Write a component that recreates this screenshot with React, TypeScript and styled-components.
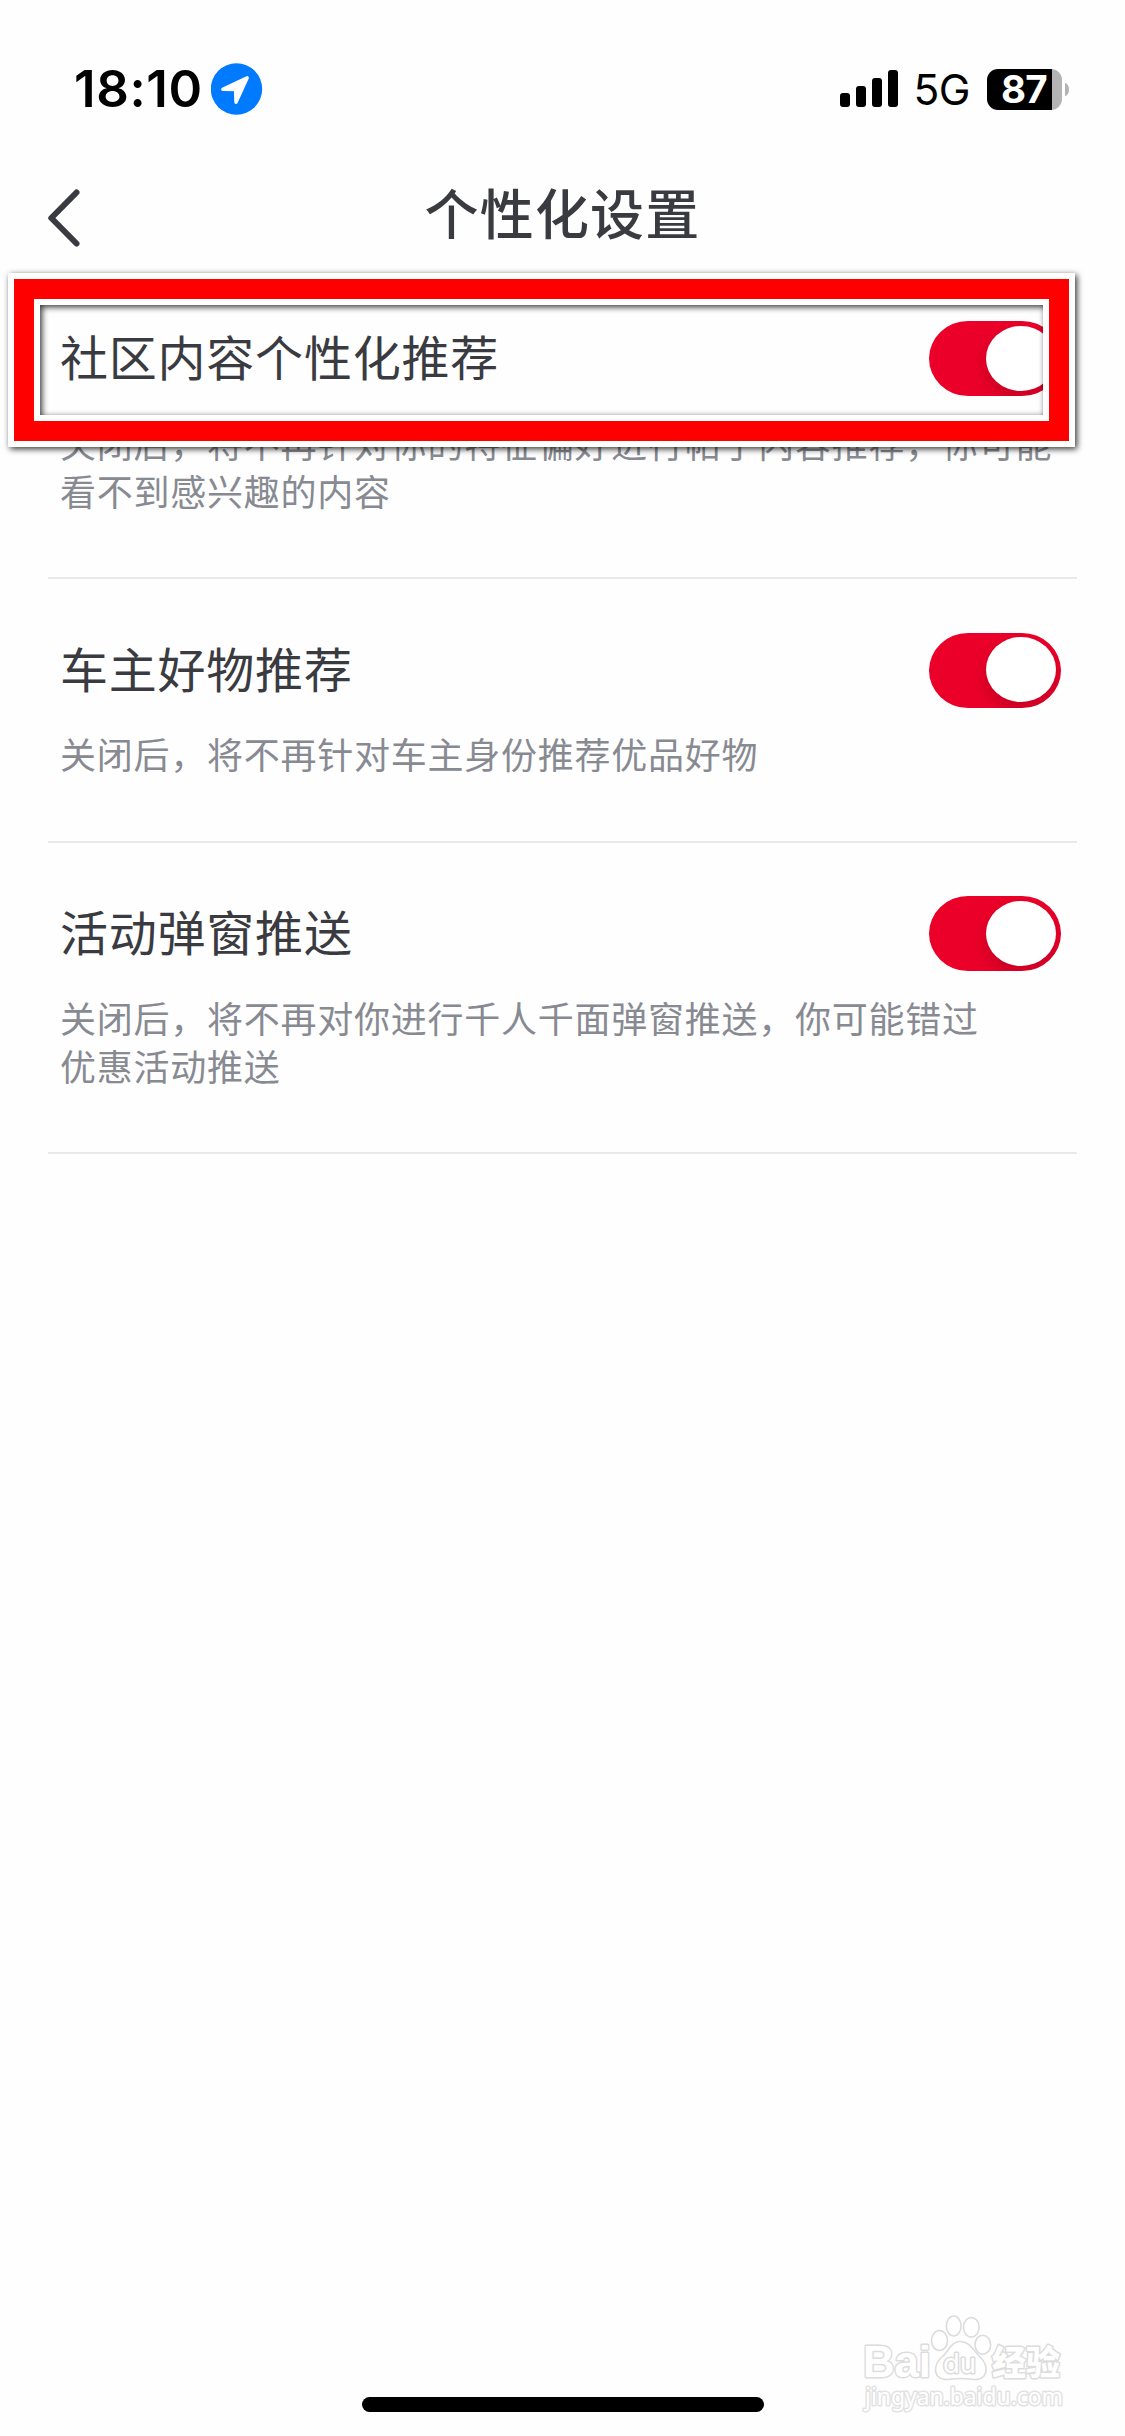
import React from "react";
import styled, { createGlobalStyle } from "styled-components";

const GlobalStyle = createGlobalStyle`
  * { box-sizing: border-box; }
  body {
    margin: 0;
    background: #fefefe;
    font-family: "Noto Sans CJK SC", "Liberation Sans", sans-serif;
    color: #3a3b41;
  }
`;

const Screen = styled.div`
  position: relative;
  width: 1125px;
  height: 2436px;
  overflow: hidden;
  display: flex;
  flex-direction: column;
  background: #fefefe;
`;

const StatusBar = styled.header`
  height: 132px;
  flex: none;
  display: flex;
  align-items: flex-start;
  justify-content: space-between;
  padding: 63px 56px 0 74px;
  font-family: Inter, "Liberation Sans", sans-serif;
  color: #000;
`;

const StatusSide = styled.div`
  display: flex;
  align-items: center;
  height: 52px;
`;

const Clock = styled.span`
  width: 137px;
  font-size: 51px;
  font-weight: 600;
  line-height: 52px;
  letter-spacing: 0.6px;
  white-space: nowrap;
`;

const Network = styled.span`
  width: 71px;
  padding-left: 14.5px;
  font-size: 42.5px;
  line-height: 52px;
  padding-top: 2px;
  letter-spacing: -0.7px;
`;

const Battery = styled.div`
  width: 75px;
  height: 41px;
  margin-left: 17px;
  border-radius: 11px;
  background: linear-gradient(to right, #000 65px, #b3b3b3 65px);
  color: #fff;
  font-size: 38.5px;
  font-weight: 700;
  line-height: 41px;
  padding-left: 14px;
  letter-spacing: -0.8px;
`;

const BatteryTip = styled.div`
  width: 4px;
  height: 13px;
  margin-left: 3px;
  border-radius: 0 4px 4px 0 / 0 6.5px 6.5px 0;
  background: #b3b3b3;
`;

const NavBar = styled.nav`
  height: 135.5px;
  flex: none;
  display: grid;
  grid-template-columns: 100px 1fr 100px;
`;

const BackButton = styled.button`
  border: 0;
  background: none;
  padding: 54px 0 0 44px;
  display: flex;
  align-items: flex-start;
`;

const PageTitle = styled.h1`
  margin: 0;
  padding-top: 40px;
  text-align: center;
  font-size: 54px;
  font-weight: 500;
  line-height: 80px;
  letter-spacing: 1.2px;
`;

const List = styled.main`
  flex: 1;
  padding: 0 48px;
`;

const Row = styled.section`
  border-bottom: 2px solid #e9e9e9;
  padding: 53.5px 16.5px 63.5px 12px;
`;

const RowHead = styled.div`
  display: flex;
  justify-content: space-between;
  align-items: flex-start;
  height: 75px;
`;

const RowTitle = styled.h2`
  margin: 0;
  font-size: 48px;
  font-weight: 400;
  line-height: 69px;
  letter-spacing: 0.78px;
`;

const RowText = styled.p`
  margin: 21.5px 0 0;
  font-size: 36px;
  line-height: 48px;
  letter-spacing: 0.75px;
  color: #888a92;
  white-space: pre;
`;

const Switch = styled.div`
  width: 132px;
  height: 75px;
  border-radius: 39px / 37.5px;
  background: #eb0029;
  overflow: hidden;
  padding: 4.5px 0 0 57px;
`;

const Knob = styled.div`
  width: 70px;
  height: 65px;
  border-radius: 50%;
  background: #fff;
  box-shadow: 0 7px 16px rgba(60, 0, 20, 0.22);
`;

const Highlight = styled.div`
  position: absolute;
  left: 8px;
  top: 272.5px;
  width: 1067px;
  height: 174px;
  border: 6px solid #fff;
  filter: drop-shadow(2.5px 2.5px 3px rgba(0, 0, 0, 0.8));
`;

const HighlightBand = styled.div`
  height: 100%;
  border: 20px solid #f00;
`;

const HighlightInner = styled.div`
  height: 100%;
  border: 6px solid #fff;
`;

const HomeIndicator = styled.div`
  position: absolute;
  left: 362px;
  top: 2397px;
  width: 402px;
  height: 15px;
  border-radius: 8px;
  background: #000;
`;

const Watermark = styled.svg`
  position: absolute;
  left: 840px;
  top: 2290px;
`;

const items = [
  {
    title: "社区内容个性化推荐",
    text: "关闭后，将不再针对你的特征偏好进行帖子内容推荐，你可能\n看不到感兴趣的内容",
  },
  { title: "车主好物推荐", text: "关闭后，将不再针对车主身份推荐优品好物" },
  {
    title: "活动弹窗推送",
    text: "关闭后，将不再对你进行千人千面弹窗推送，你可能错过\n优惠活动推送",
  },
];

const LocationIcon = () => (
  <svg width="52" height="52" viewBox="0 0 52 52">
    <circle cx="25.5" cy="26" r="25.7" fill="#007aff" />
    <path
      d="M36.2 14.7 L11.8 26.2 L24.6 26.6 L25 39.2 Z"
      fill="#fff"
      stroke="#fff"
      strokeWidth="3.4"
      strokeLinejoin="round"
    />
  </svg>
);

const SignalIcon = () => (
  <svg width="60" height="38" viewBox="0 0 60 38">
    <rect x="1" y="23" width="10" height="14" rx="3" />
    <rect x="17" y="16" width="10" height="21" rx="3" />
    <rect x="33" y="8" width="10" height="29" rx="3" />
    <rect x="49" y="0" width="10" height="37" rx="3" />
  </svg>
);

const BackIcon = () => (
  <svg width="40" height="64" viewBox="0 0 40 64" fill="none">
    <path
      d="M32.5 6.5 L7.3 32 L32.5 57.5"
      stroke="#3a3b41"
      strokeWidth="6"
      strokeLinecap="round"
      strokeLinejoin="round"
    />
  </svg>
);

const BaiduMark = () => (
  <Watermark width="285" height="146" viewBox="0 0 285 146">
    <g fill="#fff" stroke="#dcdcdc" strokeWidth="1.6" strokeLinejoin="round">
      <ellipse cx="99.5" cy="50.5" rx="8" ry="10" />
      <ellipse cx="113.7" cy="36" rx="7.3" ry="10" />
      <ellipse cx="131.3" cy="37.3" rx="7.8" ry="9.8" />
      <ellipse cx="142.8" cy="54.8" rx="7.8" ry="9.6" />
      <path d="M120 51.5 C130 51.5 133 60 139 66 C146 72 148 80 144 86 C139 92 130 88.5 121 88.5 C112 88.5 103 92 97.5 86 C93.5 80 96 72 102 67 C109 61 111 51.5 120 51.5 Z" />
    </g>
    <g
      fill="#fff"
      stroke="#dcdcdc"
      strokeWidth="3"
      paintOrder="stroke"
      strokeLinejoin="round"
    >
      <text x="23" y="87" fontFamily="Liberation Sans, sans-serif" fontSize="45" fontWeight="700" textLength="68" lengthAdjust="spacingAndGlyphs">
        Bai
      </text>
      <text x="103" y="83" fontFamily="Inter, sans-serif" fontSize="27" textLength="33" lengthAdjust="spacingAndGlyphs">
        du
      </text>
      <text x="152" y="85" fontFamily="Noto Sans CJK SC, sans-serif" fontSize="34" fontWeight="900">
        经验
      </text>
      <text x="25" y="115" fontFamily="Noto Sans, sans-serif" fontSize="23" textLength="198" lengthAdjust="spacingAndGlyphs" stroke="#e2e2e2">
        jingyan.baidu.com
      </text>
    </g>
  </Watermark>
);

export default function App() {
  return (
    <Screen>
      <GlobalStyle />
      <StatusBar>
        <StatusSide>
          <Clock>18:10</Clock>
          <LocationIcon />
        </StatusSide>
        <StatusSide>
          <SignalIcon />
          <Network>5G</Network>
          <Battery>87</Battery>
          <BatteryTip />
        </StatusSide>
      </StatusBar>
      <NavBar>
        <BackButton aria-label="返回">
          <BackIcon />
        </BackButton>
        <PageTitle>个性化设置</PageTitle>
      </NavBar>
      <List>
        {items.map((item) => (
          <Row key={item.title}>
            <RowHead>
              <RowTitle>{item.title}</RowTitle>
              <Switch role="switch" aria-checked="true">
                <Knob />
              </Switch>
            </RowHead>
            <RowText>{item.text}</RowText>
          </Row>
        ))}
      </List>
      <Highlight>
        <HighlightBand>
          <HighlightInner />
        </HighlightBand>
      </Highlight>
      <BaiduMark />
      <HomeIndicator />
    </Screen>
  );
}
